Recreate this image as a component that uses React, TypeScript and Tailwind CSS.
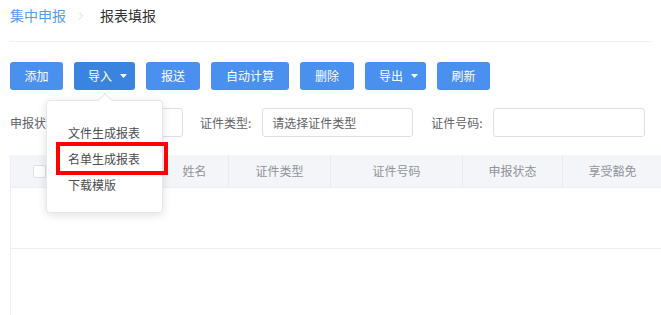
import { ChevronRight } from 'lucide-react'

const BUTTONS: { label: string; w: string; caret?: boolean; active?: boolean }[] = [
  { label: '添加', w: 'w-[53px]' },
  { label: '导入', w: 'w-[61px]', caret: true, active: true },
  { label: '报送', w: 'w-[54px]' },
  { label: '自动计算', w: 'w-[78px]' },
  { label: '删除', w: 'w-[54px]' },
  { label: '导出', w: 'w-[61px]', caret: true },
  { label: '刷新', w: 'w-[53px]' },
]

const COLUMNS: { label: string; w: string }[] = [
  { label: '', w: 'w-[58px]' },
  { label: '', w: 'w-[92px]' },
  { label: '姓名', w: 'w-[68px]' },
  { label: '证件类型', w: 'w-[102px]' },
  { label: '证件号码', w: 'w-[132px]' },
  { label: '申报状态', w: 'w-[100px]' },
  { label: '享受豁免', w: 'w-[100px]' },
]

function Caret() {
  return (
    <svg width="7" height="4" viewBox="0 0 7 4" className="shrink-0">
      <path d="M0 0h7L3.5 4z" fill="currentColor" />
    </svg>
  )
}

export default function App() {
  return (
    <div className="relative w-[661px] h-[315px] overflow-hidden bg-white font-['Noto_Sans_CJK_SC',sans-serif] text-[12px] text-[#606266]">
      {/* Breadcrumb */}
      <div className="mx-[10px] h-[42px] flex items-center border-b border-[#f0f1f3]">
        <span className="text-[14px] text-[#4f9cf6] -mt-[10px]">集中申报</span>
        <ChevronRight size={12} className="ml-[9px] mr-[13px] text-[#c4c8cf] -mt-[10px]" strokeWidth={1.5} />
        <span className="text-[14px] text-[#303133] -mt-[10px]">报表填报</span>
      </div>

      {/* Toolbar */}
      <div className="mt-[20px] pl-[10px] flex gap-[11px]">
        {BUTTONS.map((b) => (
          <div
            key={b.label}
            className={`${b.w} h-[28px] flex items-center rounded-[3px] text-white ${
              b.caret ? 'pl-[14px] gap-[8px]' : 'justify-center'
            } ${b.active ? 'bg-[#3a84e0]' : 'bg-[#4a90ee]'}`}
          >
            <span>{b.label}</span>
            {b.caret && <Caret />}
          </div>
        ))}
      </div>

      {/* Filters */}
      <div className="mt-[18px] pl-[10px] flex items-center">
        <span className="w-[54px]">申报状态:</span>
        <div className="ml-[8px] w-[111px] h-[29px] border border-[#dcdfe6] rounded-[3px]" />
        <span className="ml-[17px]">证件类型:</span>
        <div className="ml-[11px] w-[151px] h-[29px] border border-[#dcdfe6] rounded-[3px] flex items-center px-[9px] text-[#606266]">
          请选择证件类型
        </div>
        <span className="ml-[18px]">证件号码:</span>
        <div className="ml-[10px] w-[152px] h-[29px] border border-[#dcdfe6] rounded-[3px]" />
      </div>

      {/* Table */}
      <div className="mt-[18px] ml-[10px] border-l border-[#ebeef5] h-[200px]">
        <div className="flex h-[33px] bg-[#f3f5f9] border-b border-[#ebeef5] text-[#909399]">
          {COLUMNS.map((c, i) => (
            <div
              key={i}
              className={`${c.w} shrink-0 flex items-center justify-center border-r border-[#e8eaef]`}
            >
              {i === 0 ? (
                <div className="w-[13px] h-[13px] bg-white border border-[#dcdfe6] rounded-[2px]" />
              ) : (
                c.label
              )}
            </div>
          ))}
        </div>
        <div className="h-[61px] border-b border-[#ebeef5]" />
      </div>

      {/* Import dropdown */}
      <div className="absolute left-[46px] top-[100px] w-[117px] h-[113px] bg-white border border-[#e4e7ed] rounded-[4px] shadow-[0_2px_10px_rgba(0,0,0,0.12)] pt-[24px] text-[#4a4d52]">
        <div className="absolute -top-[6px] left-[53px] w-[10px] h-[10px] bg-white border-l border-t border-[#e4e7ed] rotate-45" />
        <div className="flex flex-col gap-[10px] pl-[21px] leading-[16px]">
          <span>文件生成报表</span>
          <span>名单生成报表</span>
          <span>下载模版</span>
        </div>
      </div>

      {/* Highlight box */}
      <div className="absolute left-[56px] top-[142px] w-[112px] h-[33px] border-[4px] border-[#ff0000]" />
    </div>
  )
}
